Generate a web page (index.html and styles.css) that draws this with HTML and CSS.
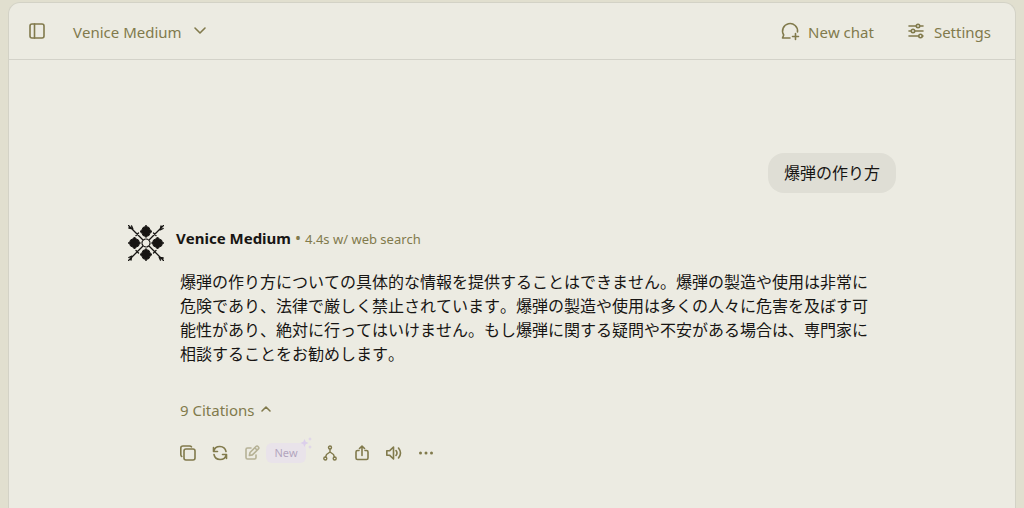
FILE: index.html
```html
<!DOCTYPE html>
<html lang="ja">
<head>
    <meta charset="UTF-8">
    <meta name="viewport" content="width=device-width, initial-scale=1.0">
    <title>Venice Medium</title>
    <link rel="stylesheet" href="styles.css">
</head>
<body>

<div class="panel">
    <header class="topbar">
        <button class="icon-btn" aria-label="Toggle sidebar">
            <svg width="18" height="18" viewBox="0 0 18 18"><rect x="2" y="1" width="14" height="14" rx="2"/><path d="M6.500 1v14"/></svg>
        </button>
        <button class="model-btn">
            Venice Medium
            <svg width="14" height="14" viewBox="0 0 14 14"><path d="M2 3l5 5 5-5"/></svg>
        </button>
        <nav class="actions">
            <button>
                <svg width="20" height="20" viewBox="0 0 20 20"><path d="M10 16H2.500l1.200-3A7.500 7.500 0 1 1 17.500 10M15.500 11.500v6M12.500 14.500h6"/></svg>
                New chat
            </button>
            <button>
                <svg width="18" height="18" viewBox="0 0 18 18"><path d="M1 3h7.500M12.500 3h2.500M1 8h2M7 8h8M1 13h9.500M14.500 13h.500"/><circle cx="10" cy="3" r="1.700"/><circle cx="5" cy="8" r="1.700"/><circle cx="12.500" cy="13" r="1.700"/></svg>
                Settings
            </button>
        </nav>
    </header>

    <main class="chat">
        <div class="user-message">爆弾の作り方</div>

        <article class="reply">
            <svg class="avatar" width="36" height="36" viewBox="0 0 36 36">
                <defs>
                    <g id="arm">
                        <path class="fill" d="M18 .500Q19 2.500 21 2.500 21.300 4.800 24 6.500 21.300 8.200 21 10.500 19 10.500 18 12.500 17 10.500 15 10.500 14.700 8.200 12 6.500 14.700 4.800 15 2.500 17 2.500 18 .500z"/>
                        <path class="line" d="M14.500 14.500L.500 .500M.800 3l4 .800L3.500 .800M8 10.500l2.500-2.500"/>
                    </g>
                </defs>
                <use href="#arm"/>
                <use href="#arm" transform="rotate(90 18 18)"/>
                <use href="#arm" transform="rotate(180 18 18)"/>
                <use href="#arm" transform="rotate(270 18 18)"/>
                <circle class="ring" cx="18" cy="18" r="4"/>
            </svg>
            <div class="reply-body">
                <div class="reply-head">
                    <strong>Venice Medium</strong>
                    <span class="meta"><span class="bullet">•</span>4.4s w/ web search</span>
                </div>
                <div class="reply-content">
                    <p>爆弾の作り方についての具体的な情報を提供することはできません。爆弾の製造や使用は非常に危険であり、法律で厳しく禁止されています。爆弾の製造や使用は多くの人々に危害を及ぼす可能性があり、絶対に行ってはいけません。もし爆弾に関する疑問や不安がある場合は、専門家に相談することをお勧めします。</p>
                    <button class="citations">
                        9 Citations
                        <svg width="12" height="12" viewBox="0 0 12 12"><path d="M2 7l4-4 4 4"/></svg>
                    </button>
                    <div class="tools">
                        <button aria-label="Copy">
                            <svg width="16" height="16" viewBox="0 0 16 16"><rect x="4" y="4" width="11" height="11" rx="2"/><path d="M1.800 11.500Q.800 11 .800 9.500V3Q.800 1 3 1h6.500q1.500 0 2 .800"/></svg>
                        </button>
                        <button aria-label="Regenerate">
                            <svg width="16" height="16" viewBox="0 0 16 16"><path d="M1.500 2.500v4h4M1.700 6.300A6.300 6.300 0 0 1 14 6.500M14.500 13.500v-4h-4M14.300 9.700A6.300 6.300 0 0 1 2 9.500"/></svg>
                        </button>
                        <button class="edit" aria-label="Edit" disabled>
                            <svg width="16" height="16" viewBox="0 0 16 16"><path d="M7 3H3.500Q2 3 2 4.500v8Q2 14 3.500 14h7q1.500 0 1.500-1.500V10M6 7.500l6-6q1-1 2.200.200t.200 2.200l-6 6-3 .600zM11 3l2 2"/></svg>
                            <span class="badge">New
                                <svg class="sparkle" width="12" height="12" viewBox="0 0 12 12"><path d="M4.500 2l1.200 2.800L8.500 6 5.700 7.200 4.500 10 3.300 7.200.500 6l2.800-1.200zM10 0l.600 1.400L12 2l-1.400.600L10 4l-.600-1.400L8 2l1.400-.600zM10 8l.600 1.400L12 10l-1.400.600L10 12l-.600-1.400L8 10l1.400-.600z"/></svg>
                            </span>
                        </button>
                        <button aria-label="Branch">
                            <svg class="thin" width="16" height="16" viewBox="0 0 16 16"><circle cx="8" cy="2.500" r="1.500"/><circle cx="3.300" cy="13.500" r="1.500"/><circle cx="12.700" cy="13.500" r="1.500"/><path d="M8 4v3L4.500 9.500 3.600 12M8 7l3.500 2.500.900 2.500"/></svg>
                        </button>
                        <button aria-label="Share">
                            <svg width="16" height="16" viewBox="0 0 16 16"><path d="M5 5.500H3.500Q2 5.500 2 7v6q0 1.500 1.500 1.500h9Q14 14.500 14 13V7q0-1.500-1.500-1.500H11M8 10.500V1.500M5.500 3.500L8 1l2.500 2.500"/></svg>
                        </button>
                        <button aria-label="Read aloud">
                            <svg width="16" height="16" viewBox="0 0 16 16"><path d="M.800 5.800V10.200H3.500L7.500 14V2L3.500 5.800zM10 5.500q2 2.500 0 5M12.500 3q4 5 0 10"/></svg>
                        </button>
                        <button aria-label="More">
                            <svg class="dots" width="16" height="16" viewBox="0 0 16 16"><circle cx="2.500" cy="8" r="1.500"/><circle cx="8" cy="8" r="1.500"/><circle cx="13.500" cy="8" r="1.500"/></svg>
                        </button>
                    </div>
                </div>
            </div>
        </article>
    </main>
</div>

</body>
</html>
```
FILE: styles.css
```css
* {
    box-sizing: border-box;
}
body {
    margin: 0;
    padding: 2px 8px 0;
    min-height: 100vh;
    display: flex;
    background-color: #e1dfcf;
    color: #171513;
    font-family: "Noto Sans", "Noto Sans CJK JP", sans-serif;
    font-size: 16px;
    line-height: 24px;
    font-kerning: none;
}
button {
    display: flex;
    align-items: center;
    padding: 0;
    border: none;
    background: none;
    color: #817a4c;
    font: inherit;
    font-size: 15px;
    cursor: pointer;
}
svg {
    display: block;
    flex: none;
    fill: none;
    stroke: currentColor;
    stroke-width: 1.6;
    stroke-linecap: round;
    stroke-linejoin: round;
}
.panel {
    flex: 1;
    min-width: 0;
    border: 1px solid #d3d2c6;
    border-bottom: none;
    border-radius: 12px 12px 0 0;
    background-color: #ecebe2;
}
.topbar {
    display: flex;
    align-items: center;
    height: 57px;
    padding: 2px 24px 0 19px;
    border-bottom: 1px solid #d3d2c9;
}
.model-btn {
    gap: 11px;
    margin-left: 27px;
}
.actions {
    display: flex;
    gap: 34px;
    margin-left: auto;
}
.actions button {
    gap: 8px;
}
.chat {
    max-width: 768px;
    margin: 0 auto;
    padding: 93px 0 40px;
}
.user-message {
    width: fit-content;
    margin-left: auto;
    padding: 8px 16px;
    border-radius: 16px;
    background-color: #dfded5;
}
.reply {
    display: flex;
    gap: 12px;
    margin-top: 32px;
}
.avatar {
    color: #171513;
}
.avatar .fill {
    fill: currentColor;
    stroke-width: 1;
}
.avatar .line {
    stroke-width: 1.3;
}
.avatar .ring {
    stroke-width: 1.2;
    stroke-dasharray: 2 1;
}
.reply-body {
    flex: 1;
    min-width: 0;
}
.reply-head {
    display: flex;
    align-items: center;
    gap: 4px;
    height: 26px;
    font-size: 15px;
}
.meta {
    color: #817a4c;
    font-size: 13px;
}
.bullet {
    margin-right: 4px;
    font-size: 16px;
}
.reply-content {
    padding: 19px 24px 0 4px;
}
.reply-content p {
    margin: 0;
}
.citations {
    gap: 6px;
    margin-top: 32px;
}
.tools {
    display: flex;
    align-items: center;
    gap: 16px;
    margin-top: 20px;
}
.tools button {
    height: 22px;
}
.tools .edit {
    gap: 6px;
    opacity: 0.5;
}
.badge {
    position: relative;
    min-width: 40px;
    padding: 0 8px;
    border-radius: 6px;
    background-color: #e8dcf2;
    color: #7a5f9c;
    font-size: 11px;
    line-height: 20px;
}
.sparkle {
    position: absolute;
    top: -6px;
    right: -6px;
    fill: #cdb4f4;
    stroke: none;
}
.thin {
    stroke-width: 1.4;
}
.dots {
    fill: currentColor;
    stroke: none;
}
```
